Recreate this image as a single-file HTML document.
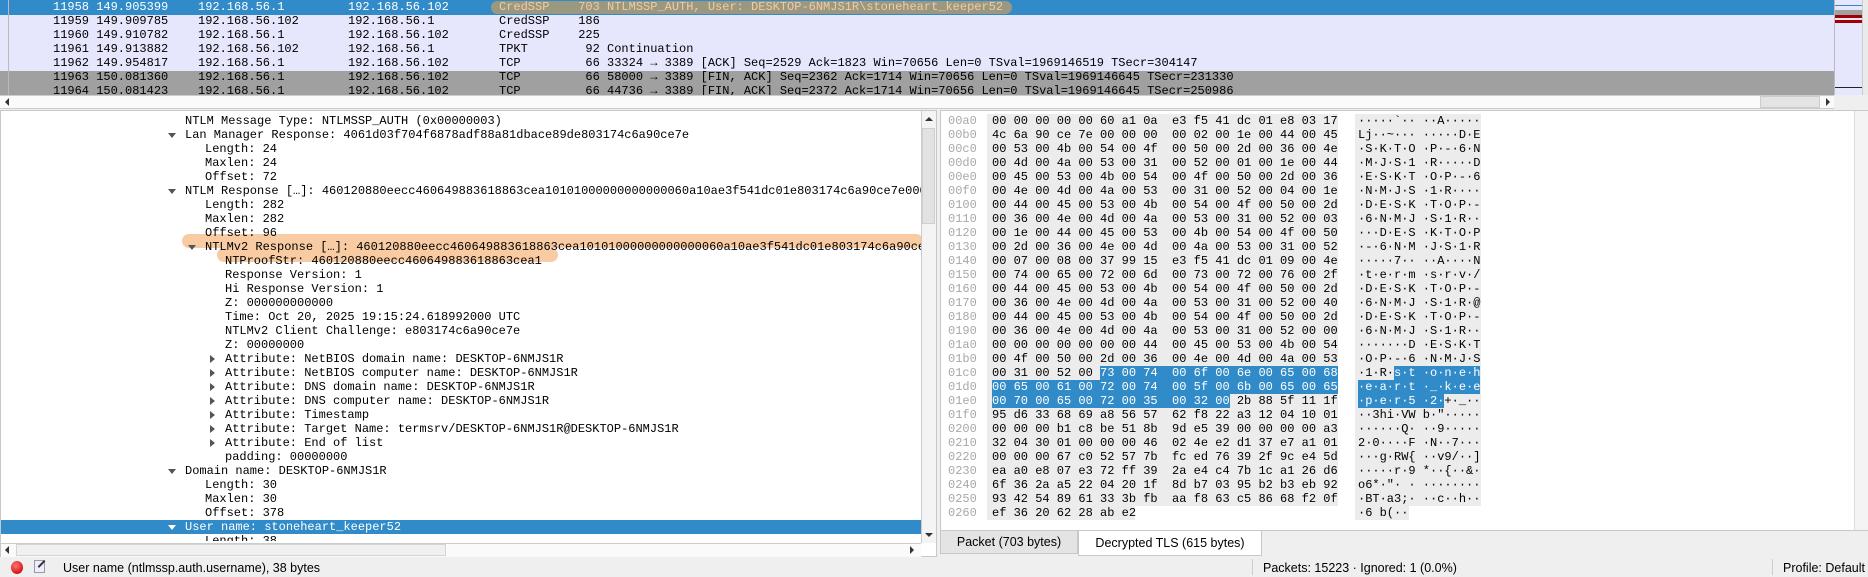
<!DOCTYPE html>
<html><head><meta charset="utf-8"><style>
*{margin:0;padding:0;box-sizing:border-box}
body{width:1868px;height:577px;overflow:hidden;background:#efefef;position:relative;font-family:"Liberation Mono","DejaVu Sans Mono",monospace;font-size:12px;color:#000}
.a{position:absolute;white-space:pre;line-height:14px}
.r{position:absolute;left:0;width:1834px;height:14px}
.tr{position:absolute;height:14px;line-height:14px;white-space:pre}
.tri{position:absolute;width:0;height:0}
.dn{border-left:4px solid transparent;border-right:4px solid transparent;border-top:5px solid #555}
.rt{border-top:4px solid transparent;border-bottom:4px solid transparent;border-left:5px solid #555}
.hl{background:#308bc8;color:#fff;display:inline-block;height:14px}
.off{color:#a8a8a8}
.sans{font-family:"Liberation Sans","DejaVu Sans",sans-serif}
.bg{position:absolute;background:#ececec}
</style></head><body>

<!-- packet list -->
<div style="position:absolute;left:0;top:0;width:1834px;height:95px;background:#fff;overflow:hidden">
<div class="r" style="top:0;height:15px;background:#308bc8"></div>
<div class="r" style="top:15px;height:56px;background:#e6e6fd"></div>
<div class="r" style="top:71px;height:28px;background:#a0a0a0"></div>
<div style="position:absolute;left:491px;top:1px;width:521px;height:13px;border-radius:7px;background:#9a9880"></div>
<div style="position:absolute;left:8px;top:0;width:1px;height:95px;background:#bbb"></div>
<div class="a" style="top:0;color:#fff;left:53px">11958 149.905399</div><div class="a" style="top:0;left:198px;color:#fff">192.168.56.1</div><div class="a" style="top:0;left:348px;color:#fff">192.168.56.102</div>
<div class="a" style="top:0;left:499px;color:#f6caa0">CredSSP    703 NTLMSSP_AUTH, User: DESKTOP-6NMJS1R\stoneheart_keeper52</div>
<div class="a" style="top:14px;left:53px">11959 149.909785</div><div class="a" style="top:14px;left:198px">192.168.56.102</div><div class="a" style="top:14px;left:348px">192.168.56.1</div><div class="a" style="top:14px;left:499px">CredSSP    186</div>
<div class="a" style="top:28px;left:53px">11960 149.910782</div><div class="a" style="top:28px;left:198px">192.168.56.1</div><div class="a" style="top:28px;left:348px">192.168.56.102</div><div class="a" style="top:28px;left:499px">CredSSP    225</div>
<div class="a" style="top:42px;left:53px">11961 149.913882</div><div class="a" style="top:42px;left:198px">192.168.56.102</div><div class="a" style="top:42px;left:348px">192.168.56.1</div><div class="a" style="top:42px;left:499px">TPKT        92 Continuation</div>
<div class="a" style="top:56px;left:53px">11962 149.954817</div><div class="a" style="top:56px;left:198px">192.168.56.1</div><div class="a" style="top:56px;left:348px">192.168.56.102</div><div class="a" style="top:56px;left:499px">TCP         66 33324 → 3389 [ACK] Seq=2529 Ack=1823 Win=70656 Len=0 TSval=1969146519 TSecr=304147</div>
<div class="a" style="top:70px;left:53px">11963 150.081360</div><div class="a" style="top:70px;left:198px">192.168.56.1</div><div class="a" style="top:70px;left:348px">192.168.56.102</div><div class="a" style="top:70px;left:499px">TCP         66 58000 → 3389 [FIN, ACK] Seq=2362 Ack=1714 Win=70656 Len=0 TSval=1969146645 TSecr=231330</div>
<div class="a" style="top:84px;left:53px">11964 150.081423</div><div class="a" style="top:84px;left:198px">192.168.56.1</div><div class="a" style="top:84px;left:348px">192.168.56.102</div><div class="a" style="top:84px;left:499px">TCP         66 44736 → 3389 [FIN, ACK] Seq=2372 Ack=1714 Win=70656 Len=0 TSval=1969146645 TSecr=250986</div>
</div>
<!-- minimap & scrollbar -->
<div style="position:absolute;left:1834px;top:0;width:1px;height:95px;background:#bbb"></div>
<div style="position:absolute;left:1835px;top:0;width:27px;height:95px;background:#e6e6fd"></div>
<div style="position:absolute;left:1835px;top:5px;width:27px;height:1px;background:#308bc8"></div>
<div style="position:absolute;left:1835px;top:10px;width:27px;height:5px;background:#a0a0a0"></div>
<div style="position:absolute;left:1835px;top:15px;width:27px;height:3px;background:#a00000"></div>
<div style="position:absolute;left:1835px;top:20px;width:27px;height:3px;background:#a00000"></div>
<div style="position:absolute;left:1835px;top:87px;width:27px;height:1px;background:#223"></div>
<div style="position:absolute;left:1862px;top:0;width:6px;height:95px;background:#eaeaea;border-left:1px solid #ccc"></div>
<!-- h scrollbar -->
<div style="position:absolute;left:0;top:95px;width:1834px;height:14px;background:#fafafa;border-top:1px solid #ccc;border-bottom:1px solid #ccc"></div>
<div style="position:absolute;left:1760px;top:96px;width:60px;height:12px;background:#e4e4e4;border:1px solid #ccc"></div>
<div class="tri" style="left:5px;top:98px;border-top:4px solid transparent;border-bottom:4px solid transparent;border-right:4px solid #333"></div>
<div class="tri" style="left:1826px;top:98px;border-top:4px solid transparent;border-bottom:4px solid transparent;border-left:4px solid #333"></div>

<!-- tree panel -->
<div style="position:absolute;left:0;top:110px;width:937px;height:447px;background:#fff;border:1px solid #c8c8c8"></div>
<div style="position:absolute;left:1px;top:520px;width:920px;height:14px;background:#308bc8"></div>
<div style="position:absolute;left:182px;top:234px;width:741px;height:14px;border-radius:7px;background:#f8cba3"></div>
<div style="position:absolute;left:217px;top:248px;width:341px;height:14px;border-radius:7px;background:#f8cba3"></div>
<div style="position:absolute;left:0;top:114px;width:921px;height:427px;overflow:hidden">
<div class="tr" style="top:0;left:185px">NTLM Message Type: NTLMSSP_AUTH (0x00000003)</div>
<div class="tri dn" style="left:168px;top:19px"></div><div class="tr" style="top:14px;left:185px">Lan Manager Response: 4061d03f704f6878adf88a81dbace89de803174c6a90ce7e</div>
<div class="tr" style="top:28px;left:205px">Length: 24</div>
<div class="tr" style="top:42px;left:205px">Maxlen: 24</div>
<div class="tr" style="top:56px;left:205px">Offset: 72</div>
<div class="tri dn" style="left:168px;top:75px"></div><div class="tr" style="top:70px;left:185px">NTLM Response […]: 460120880eecc460649883618863cea10101000000000000060a10ae3f541dc01e803174c6a90ce7e0000</div>
<div class="tr" style="top:84px;left:205px">Length: 282</div>
<div class="tr" style="top:98px;left:205px">Maxlen: 282</div>
<div class="tr" style="top:112px;left:205px">Offset: 96</div>
<div class="tri dn" style="left:188px;top:131px"></div><div class="tr" style="top:126px;left:205px">NTLMv2 Response […]: 460120880eecc460649883618863cea10101000000000000060a10ae3f541dc01e803174c6a90ce7</div>
<div class="tr" style="top:140px;left:225px">NTProofStr: 460120880eecc460649883618863cea1</div>
<div class="tr" style="top:154px;left:225px">Response Version: 1</div>
<div class="tr" style="top:168px;left:225px">Hi Response Version: 1</div>
<div class="tr" style="top:182px;left:225px">Z: 000000000000</div>
<div class="tr" style="top:196px;left:225px">Time: Oct 20, 2025 19:15:24.618992000 UTC</div>
<div class="tr" style="top:210px;left:225px">NTLMv2 Client Challenge: e803174c6a90ce7e</div>
<div class="tr" style="top:224px;left:225px">Z: 00000000</div>
<div class="tri rt" style="left:210px;top:241px"></div><div class="tr" style="top:238px;left:225px">Attribute: NetBIOS domain name: DESKTOP-6NMJS1R</div>
<div class="tri rt" style="left:210px;top:255px"></div><div class="tr" style="top:252px;left:225px">Attribute: NetBIOS computer name: DESKTOP-6NMJS1R</div>
<div class="tri rt" style="left:210px;top:269px"></div><div class="tr" style="top:266px;left:225px">Attribute: DNS domain name: DESKTOP-6NMJS1R</div>
<div class="tri rt" style="left:210px;top:283px"></div><div class="tr" style="top:280px;left:225px">Attribute: DNS computer name: DESKTOP-6NMJS1R</div>
<div class="tri rt" style="left:210px;top:297px"></div><div class="tr" style="top:294px;left:225px">Attribute: Timestamp</div>
<div class="tri rt" style="left:210px;top:311px"></div><div class="tr" style="top:308px;left:225px">Attribute: Target Name: termsrv/DESKTOP-6NMJS1R@DESKTOP-6NMJS1R</div>
<div class="tri rt" style="left:210px;top:325px"></div><div class="tr" style="top:322px;left:225px">Attribute: End of list</div>
<div class="tr" style="top:336px;left:225px">padding: 00000000</div>
<div class="tri dn" style="left:168px;top:355px"></div><div class="tr" style="top:350px;left:185px">Domain name: DESKTOP-6NMJS1R</div>
<div class="tr" style="top:364px;left:205px">Length: 30</div>
<div class="tr" style="top:378px;left:205px">Maxlen: 30</div>
<div class="tr" style="top:392px;left:205px">Offset: 378</div>
<div class="tri" style="left:168px;top:411px;border-left:4px solid transparent;border-right:4px solid transparent;border-top:5px solid #fff"></div><div class="tr" style="top:406px;left:185px;color:#fff">User name: stoneheart_keeper52</div>
<div class="tr" style="top:420px;left:205px">Length: 38</div>
</div>
<!-- tree scrollbars -->
<div style="position:absolute;left:921px;top:111px;width:15px;height:432px;background:#f4f4f4;border-left:1px solid #ccc"></div>
<div style="position:absolute;left:922px;top:128px;width:13px;height:96px;background:#e2e2e2;border:1px solid #cfcfcf"></div>
<div class="tri" style="left:925px;top:117px;border-left:4px solid transparent;border-right:4px solid transparent;border-bottom:4px solid #333"></div>
<div class="tri" style="left:925px;top:533px;border-left:4px solid transparent;border-right:4px solid transparent;border-top:4px solid #333"></div>
<div style="position:absolute;left:1px;top:543px;width:920px;height:14px;background:#fafafa;border-top:1px solid #ccc"></div>
<div style="position:absolute;left:16px;top:544px;width:430px;height:12px;background:#f0f0f0;border:1px solid #d4d4d4"></div>
<div class="tri" style="left:5px;top:546px;border-top:4px solid transparent;border-bottom:4px solid transparent;border-right:4px solid #333"></div>
<div class="tri" style="left:910px;top:546px;border-top:4px solid transparent;border-bottom:4px solid transparent;border-left:4px solid #333"></div>

<!-- hex panel -->
<div style="position:absolute;left:940px;top:110px;width:928px;height:421px;background:#fff;border:1px solid #c8c8c8"></div>
<div style="position:absolute;left:1854px;top:111px;width:14px;height:419px;background:#f4f4f4;border-left:1px solid #ddd"></div>
<div class="bg" style="left:987px;top:114px;width:351px;height:392px"></div>
<div class="bg" style="left:987px;top:506px;width:148px;height:14px"></div>
<div class="bg" style="left:1355px;top:114px;width:126px;height:392px"></div>
<div class="bg" style="left:1355px;top:506px;width:54px;height:14px"></div>
<div class="a off" style="left:948px;top:114px">00a0
00b0
00c0
00d0
00e0
00f0
0100
0110
0120
0130
0140
0150
0160
0170
0180
0190
01a0
01b0
01c0
01d0
01e0
01f0
0200
0210
0220
0230
0240
0250
0260</div>
<div class="a" style="left:992px;top:114px">00 00 00 00 00 60 a1 0a  e3 f5 41 dc 01 e8 03 17
4c 6a 90 ce 7e 00 00 00  00 02 00 1e 00 44 00 45
00 53 00 4b 00 54 00 4f  00 50 00 2d 00 36 00 4e
00 4d 00 4a 00 53 00 31  00 52 00 01 00 1e 00 44
00 45 00 53 00 4b 00 54  00 4f 00 50 00 2d 00 36
00 4e 00 4d 00 4a 00 53  00 31 00 52 00 04 00 1e
00 44 00 45 00 53 00 4b  00 54 00 4f 00 50 00 2d
00 36 00 4e 00 4d 00 4a  00 53 00 31 00 52 00 03
00 1e 00 44 00 45 00 53  00 4b 00 54 00 4f 00 50
00 2d 00 36 00 4e 00 4d  00 4a 00 53 00 31 00 52
00 07 00 08 00 37 99 15  e3 f5 41 dc 01 09 00 4e
00 74 00 65 00 72 00 6d  00 73 00 72 00 76 00 2f
00 44 00 45 00 53 00 4b  00 54 00 4f 00 50 00 2d
00 36 00 4e 00 4d 00 4a  00 53 00 31 00 52 00 40
00 44 00 45 00 53 00 4b  00 54 00 4f 00 50 00 2d
00 36 00 4e 00 4d 00 4a  00 53 00 31 00 52 00 00
00 00 00 00 00 00 00 44  00 45 00 53 00 4b 00 54
00 4f 00 50 00 2d 00 36  00 4e 00 4d 00 4a 00 53
00 31 00 52 00 <span class="hl">73 00 74  00 6f 00 6e 00 65 00 68</span>
<span class="hl">00 65 00 61 00 72 00 74  00 5f 00 6b 00 65 00 65</span>
<span class="hl">00 70 00 65 00 72 00 35  00 32 00</span> 2b 88 5f 11 1f
95 d6 33 68 69 a8 56 57  62 f8 22 a3 12 04 10 01
00 00 00 b1 c8 be 51 8b  9d e5 39 00 00 00 00 a3
32 04 30 01 00 00 00 46  02 4e e2 d1 37 e7 a1 01
00 00 00 67 c0 52 57 7b  fc ed 76 39 2f 9c e4 5d
ea a0 e8 07 e3 72 ff 39  2a e4 c4 7b 1c a1 26 d6
6f 36 2a a5 22 04 20 1f  8d b7 03 95 b2 b3 eb 92
93 42 54 89 61 33 3b fb  aa f8 63 c5 86 68 f2 0f
ef 36 20 62 28 ab e2</div>
<div class="a" style="left:1358px;top:114px">·····`·· ··A·····
Lj··~··· ·····D·E
·S·K·T·O ·P·-·6·N
·M·J·S·1 ·R·····D
·E·S·K·T ·O·P·-·6
·N·M·J·S ·1·R····
·D·E·S·K ·T·O·P·-
·6·N·M·J ·S·1·R··
···D·E·S ·K·T·O·P
·-·6·N·M ·J·S·1·R
·····7·· ··A····N
·t·e·r·m ·s·r·v·/
·D·E·S·K ·T·O·P·-
·6·N·M·J ·S·1·R·@
·D·E·S·K ·T·O·P·-
·6·N·M·J ·S·1·R··
·······D ·E·S·K·T
·O·P·-·6 ·N·M·J·S
·1·R·<span class="hl">s·t ·o·n·e·h</span>
<span class="hl">·e·a·r·t ·_·k·e·e</span>
<span class="hl">·p·e·r·5 ·2·</span>+·_··
··3hi·VW b·"·····
······Q· ··9·····
2·0····F ·N··7···
···g·RW{ ··v9/··]
·····r·9 *··{··&amp;·
o6*·"· · ········
·BT·a3;· ··c··h··
·6 b(··</div>

<!-- tabs -->
<div style="position:absolute;left:940px;top:531px;width:138px;height:23px;background:#e4e4e4;border:1px solid #c8c8c8;border-top:none" class="sans"><div style="font-size:12.5px;line-height:22px;text-align:center">Packet (703 bytes)</div></div>
<div style="position:absolute;left:1078px;top:531px;width:184px;height:25px;background:#fff;border:1px solid #c8c8c8;border-top:none" class="sans"><div style="font-size:12.5px;line-height:24px;text-align:center">Decrypted TLS (615 bytes)</div></div>

<!-- status bar -->
<div style="position:absolute;left:0;top:557px;width:1868px;height:20px;background:#efefef"></div>
<div style="position:absolute;left:11px;top:561px;width:12px;height:13px;border-radius:50%;background:radial-gradient(circle at 40% 35%,#f77,#d22 60%,#a00)"></div>
<div style="position:absolute;left:34px;top:560px;width:11px;height:13px;background:#eef;border:1px solid #99a"></div>
<div style="position:absolute;left:37px;top:563px;width:9px;height:2px;background:#333;transform:rotate(-45deg)"></div>
<div class="a sans" style="left:63px;top:560px;font-size:12.5px;line-height:16px">User name (ntlmssp.auth.username), 38 bytes</div>
<div style="position:absolute;left:1252px;top:559px;width:1px;height:16px;background:#ccc"></div>
<div class="a sans" style="left:1263px;top:560px;font-size:12.5px;line-height:16px">Packets: 15223 · Ignored: 1 (0.0%)</div>
<div style="position:absolute;left:1772px;top:559px;width:1px;height:16px;background:#ccc"></div>
<div class="a sans" style="left:1783px;top:560px;font-size:12.5px;line-height:16px">Profile: Default</div>
</body></html>
